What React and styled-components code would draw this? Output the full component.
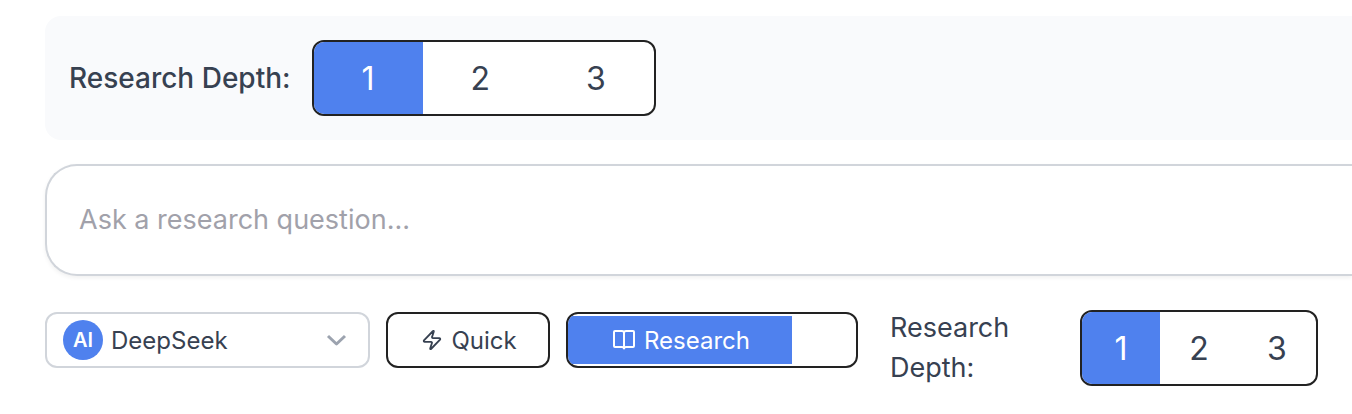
import React, { useState } from "react";
import styled, { createGlobalStyle } from "styled-components";
import { Zap } from "lucide-react";

const GlobalStyle = createGlobalStyle`
  *, *::before, *::after { box-sizing: border-box; }
  body {
    margin: 0;
    background: #fff;
    color: #374151;
    font-family: Inter, "Liberation Sans", sans-serif;
  }
  button, input, select { font: inherit; color: inherit; }
`;

const Page = styled.main`
  display: flex;
  flex-direction: column;
  gap: 24px;
  padding: 16px 0 24px 45px;
`;

const DepthPanel = styled.section`
  display: flex;
  align-items: center;
  gap: 21px;
  padding: 24px;
  background: #f9fafc;
  border-radius: 16px 0 0 16px;
`;

const DepthLabel = styled.span`
  font-size: ${(p) => (p.$strong ? 28 : 27)}px;
  line-height: 40px;
  font-weight: ${(p) => (p.$strong ? 500 : 400)};
  ${(p) => p.$width && `width: ${p.$width}px;`}
`;

const Segments = styled.div`
  display: flex;
  height: 76px;
  ${(p) => p.$width && `width: ${p.$width}px;`}
  overflow: hidden;
  background: #fff;
  border: 2px solid #222;
  border-radius: 12px;
`;

const Segment = styled.button`
  flex: ${(p) => (p.$even ? "1 1 0" : "none")};
  padding: 2px ${(p) => (p.$even ? 0 : 48)}px 0;
  border: 0;
  font-size: 32px;
  line-height: 40px;
  cursor: pointer;
  background: ${(p) => (p.$active ? "#4f81ee" : "transparent")};
  color: ${(p) => (p.$active ? "#fff" : "#374151")};
`;

const QuestionInput = styled.input`
  width: 100%;
  height: 112px;
  padding: 0 32px 2px;
  font-size: 27px;
  background: #fff;
  border: 2px solid #d1d5db;
  border-right: 0;
  border-radius: 32px 0 0 32px;
  box-shadow: 0 2px 4px rgba(0, 0, 0, 0.06);
  outline: none;
  &::placeholder { color: #a1a1aa; opacity: 1; }
`;

const Toolbar = styled.div`
  display: flex;
  align-items: flex-start;
  gap: 32px;
  padding-top: 8px;
`;

const Choices = styled.div`
  display: flex;
  gap: 16px;
  padding-top: 4px;
`;

const ModelField = styled.label`
  display: flex;
  align-items: center;
  gap: 8px;
  width: 325px;
  height: 56px;
  padding: 0 20px 0 16px;
  border: 2px solid #d1d5db;
  border-radius: 12px;
`;

const ModelBadge = styled.span`
  display: grid;
  place-items: center;
  width: 40px;
  height: 40px;
  border-radius: 50%;
  background: #4f81ee;
  color: #fff;
  font-size: 20px;
  font-weight: 600;
`;

const ModelSelect = styled.select`
  flex: 1;
  min-width: 0;
  padding: 2px 0 0;
  border: 0;
  outline: none;
  appearance: none;
  background: transparent;
  font-size: 24px;
  line-height: 32px;
`;

const ModeButton = styled.button`
  display: flex;
  align-items: center;
  justify-content: ${(p) => (p.$active ? "flex-start" : "center")};
  width: ${(p) => p.$width}px;
  height: 56px;
  padding: 0;
  overflow: hidden;
  background: #fff;
  border: 2px solid #222;
  border-radius: 12px;
  font-size: 24px;
  line-height: 32px;
  cursor: pointer;
`;

const ModeContent = styled.span`
  display: flex;
  align-items: center;
  justify-content: center;
  gap: 8px;
  height: 48px;
  width: ${(p) => (p.$active ? "224px" : "auto")};
  padding-left: 2px;
  background: ${(p) => (p.$active ? "#4f81ee" : "transparent")};
  color: ${(p) => (p.$active ? "#fff" : "#374151")};
`;

const ModeText = styled.span`
  padding-top: 2px;
`;

const DepthField = styled.div`
  display: flex;
  align-items: center;
`;

function BookIcon() {
  return (
    <svg width="24" height="24" viewBox="0 0 24 24" fill="none" stroke="currentColor"
      strokeWidth="2" strokeLinecap="round" strokeLinejoin="round" aria-hidden="true">
      <path d="M12 5a2 2 0 0 0-2-2H3a1 1 0 0 0-1 1v14a1 1 0 0 0 1 1h7a2 2 0 0 1 2 1.500a2 2 0 0 1 2-1.500h7a1 1 0 0 0 1-1V4a1 1 0 0 0-1-1h-7a2 2 0 0 0-2 2v15" />
    </svg>
  );
}

function ChevronIcon() {
  return (
    <svg width="24" height="24" viewBox="0 0 24 24" fill="none" stroke="#9ca3af"
      strokeWidth="3" strokeLinejoin="round" aria-hidden="true">
      <path d="M4 8l8.500 8L21 8" />
    </svg>
  );
}

function DepthControl({ id, value, onChange, even, width }) {
  return (
    <Segments role="group" aria-labelledby={id} $width={width}>
      {[1, 2, 3].map((n) => (
        <Segment
          key={n}
          type="button"
          aria-pressed={value === n}
          $active={value === n}
          $even={even}
          onClick={() => onChange(n)}
        >
          {n}
        </Segment>
      ))}
    </Segments>
  );
}

export default function App() {
  const [depth, setDepth] = useState(1);
  const [mode, setMode] = useState("research");

  return (
    <>
      <GlobalStyle />
      <Page>
        <DepthPanel>
          <DepthLabel id="panel-depth" $strong>Research Depth:</DepthLabel>
          <DepthControl id="panel-depth" value={depth} onChange={setDepth} />
        </DepthPanel>
        <QuestionInput aria-label="Research question" placeholder="Ask a research question..." />
        <Toolbar>
          <Choices>
            <ModelField>
              <ModelBadge aria-hidden="true">AI</ModelBadge>
              <ModelSelect aria-label="Model" defaultValue="deepseek">
                <option value="deepseek">DeepSeek</option>
              </ModelSelect>
              <ChevronIcon />
            </ModelField>
            <ModeButton
              type="button"
              $width={164}
              $active={mode === "quick"}
              aria-pressed={mode === "quick"}
              onClick={() => setMode("quick")}
            >
              <ModeContent $active={mode === "quick"}>
                <Zap size={22} aria-hidden="true" />
                <ModeText>Quick</ModeText>
              </ModeContent>
            </ModeButton>
            <ModeButton
              type="button"
              $width={292}
              $active={mode === "research"}
              aria-pressed={mode === "research"}
              onClick={() => setMode("research")}
            >
              <ModeContent $active={mode === "research"}>
                <BookIcon />
                <ModeText>Research</ModeText>
              </ModeContent>
            </ModeButton>
          </Choices>
          <DepthField>
            <DepthLabel id="toolbar-depth" $width={190}>Research Depth:</DepthLabel>
            <DepthControl id="toolbar-depth" value={depth} onChange={setDepth} even width={238} />
          </DepthField>
        </Toolbar>
      </Page>
    </>
  );
}
